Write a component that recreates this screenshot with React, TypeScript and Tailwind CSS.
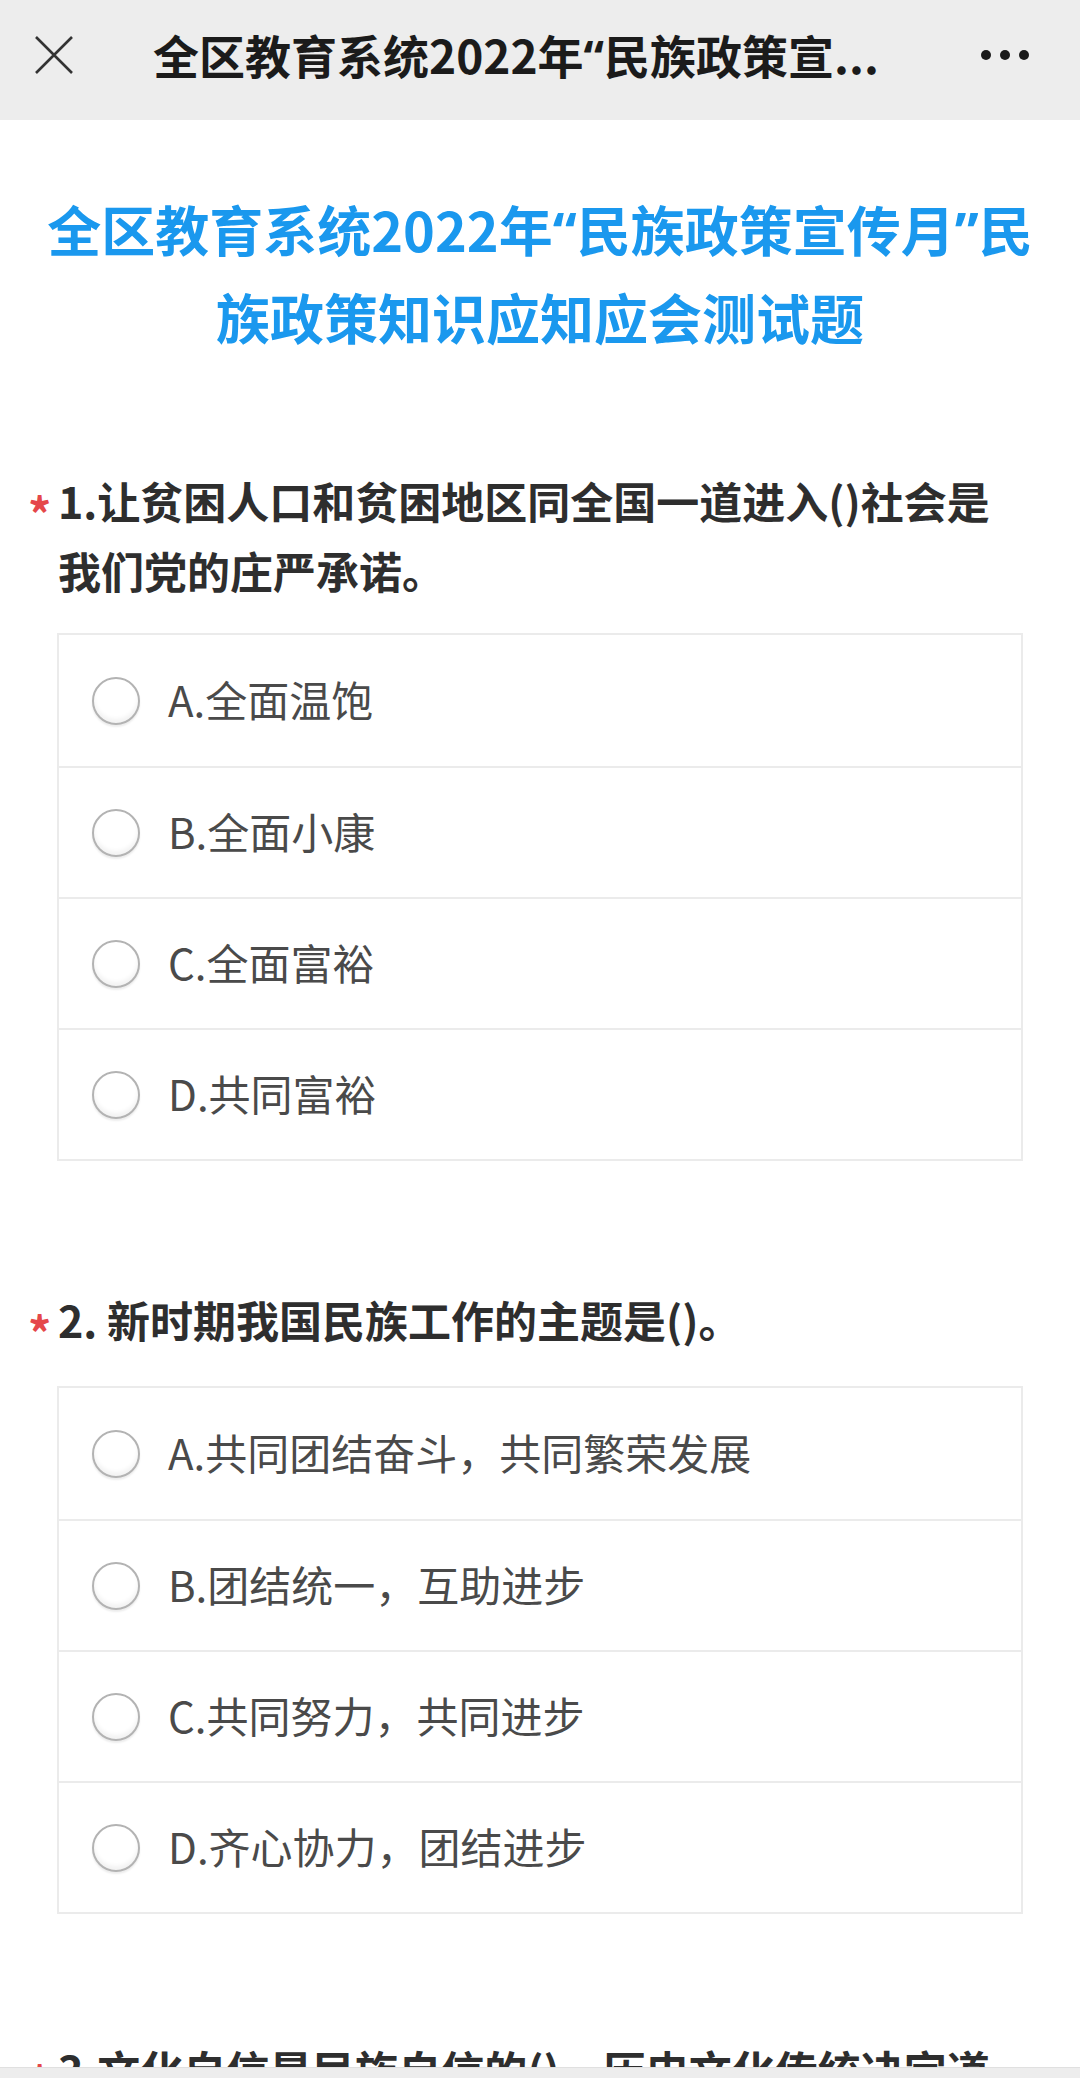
import React from "react";

const FONT = { fontFamily: '"Noto Sans CJK SC", "Noto Sans", sans-serif' };

function Q({ c }: { c: string }) {
  return <span style={{ fontFamily: '"Noto Sans", sans-serif' }}>{c}</span>;
}

function Radio() {
  return (
    <div className="w-[48px] h-[48px] shrink-0 rounded-full border-2 border-[#b3b3b3] bg-white shadow-[0_2px_2px_rgba(0,0,0,0.08),inset_0_-4px_4px_rgba(0,0,0,0.05)]" />
  );
}

function Options({ items }: { items: string[] }) {
  return (
    <div className="mx-[57px] border-2 border-[#ebebeb] bg-white">
      {items.map((t, i) => (
        <div
          key={i}
          className={
            "h-[131px] flex items-center pl-[33px] " +
            (i > 0 ? "border-t-2 border-[#ebebeb]" : "")
          }
        >
          <Radio />
          <span className="ml-[28px] -mt-[3px] text-[42px] leading-none text-[#4a4a4a]">{t}</span>
        </div>
      ))}
    </div>
  );
}

function QTitle({ children, className = "" }: { children: React.ReactNode; className?: string }) {
  return (
    <div className={"relative pl-[58px] pr-[58px] " + className}>
      <span className="absolute left-[28px] top-[24px] text-[46px] leading-none font-bold text-[#e5474a]">*</span>
      <div className="text-[43px] leading-[70px] font-bold text-[#2e2e2e]">{children}</div>
    </div>
  );
}

export default function App() {
  return (
    <div className="relative w-[1080px] h-[2078px] overflow-hidden bg-white" style={FONT}>
      <div className="h-[120px] bg-[#ededed] flex items-center pb-[10px]">
        <svg className="ml-[35px] shrink-0" width="38" height="38" viewBox="0 0 38 38">
          <path d="M1 1 L37 37 M37 1 L1 37" stroke="#333" strokeWidth="2.6" fill="none" />
        </svg>
        <div className="ml-[80px] text-[46px] leading-none font-bold text-[#1b1b1b] whitespace-nowrap">
          全区教育系统2022年<Q c="“" />民族政策宣...
        </div>
        <div className="ml-auto mr-[51px] flex items-center gap-[9px]">
          <span className="w-[10px] h-[10px] rounded-full bg-[#1a1a1a]" />
          <span className="w-[10px] h-[10px] rounded-full bg-[#1a1a1a]" />
          <span className="w-[10px] h-[10px] rounded-full bg-[#1a1a1a]" />
        </div>
      </div>

      <div className="pt-[66px] text-center text-[54px] leading-[86px] font-bold text-[#1a98ee]">
        全区教育系统2022年<Q c="“" />民族政策宣传月<Q c="”" />民
        <br />
        族政策知识应知应会测试题
      </div>

      <QTitle className="mt-[105px]">1.让贫困人口和贫困地区同全国一道进入()社会是我们党的庄严承诺。</QTitle>
      <div className="mt-[28px]">
        <Options items={["A.全面温饱", "B.全面小康", "C.全面富裕", "D.共同富裕"]} />
      </div>

      <QTitle className="mt-[123px]">2. 新时期我国民族工作的主题是()。</QTitle>
      <div className="mt-[32px]">
        <Options
          items={[
            "A.共同团结奋斗，共同繁荣发展",
            "B.团结统一，互助进步",
            "C.共同努力，共同进步",
            "D.齐心协力，团结进步",
          ]}
        />
      </div>

      <QTitle className="mt-[120px]">3.文化自信是民族自信的()，历史文化传统决定道路选择。</QTitle>

      <div className="absolute left-0 right-0 bottom-0 h-[11px] bg-[#ededed] border-t border-[#e0e0e0]" />
    </div>
  );
}
